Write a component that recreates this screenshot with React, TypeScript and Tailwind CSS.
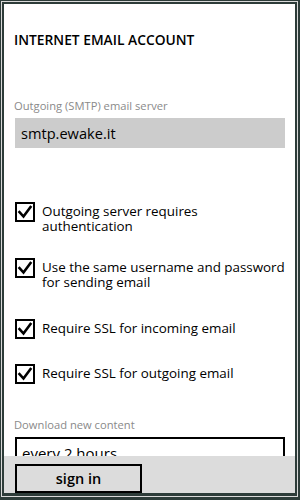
import { ReactNode } from 'react';

function CheckRow({ children, className }: { children: ReactNode; className?: string }) {
  return (
    <div className={`flex items-start ${className ?? ''}`}>
      <div className="w-[20px] h-[20px] shrink-0 border-2 border-black bg-white flex items-center justify-center">
        <svg width="16" height="16" viewBox="0 0 16 16">
          <path d="M2.5 8 L6.5 12.5 L13.5 3" fill="none" stroke="black" strokeWidth="2.6" strokeLinecap="square" />
        </svg>
      </div>
      <p className="ml-[7px] pt-[2px] text-[13.4px] leading-[15px] text-black whitespace-nowrap">{children}</p>
    </div>
  );
}

export default function App() {
  return (
    <div
      className="w-[300px] h-[500px] bg-[#d9d9d9] border-[#2d3c39] border-t border-l border-r-2 border-b-[3px] p-[1px]"
      style={{ fontFamily: '"Open Sans", "Noto Sans", sans-serif' }}
    >
      <div className="relative h-full bg-white border-[#2d3c39] border-t-2 border-l-2 border-r-2 border-b-[3px] overflow-hidden">
        <div className="px-[10px]">
          <h1 className="mt-[26px] text-[13.8px] leading-[20px] font-semibold text-black">INTERNET EMAIL ACCOUNT</h1>

          <p className="mt-[48px] text-[11.2px] leading-[16px] text-[#8a8a8a]">Outgoing (SMTP) email server</p>
          <div className="mt-[4px] ml-[1px] h-[30px] bg-[#cccccc] px-[6px] text-[14.6px] leading-[30px] text-black">
            smtp.ewake.it
          </div>

          <CheckRow className="mt-[54px] ml-[1px]">
            Outgoing server requires
            <br />
            authentication
          </CheckRow>
          <CheckRow className="mt-[24px] ml-[1px]">
            Use the same username and password
            <br />
            for sending email
          </CheckRow>
          <CheckRow className="mt-[29px] ml-[1px]">Require SSL for incoming email</CheckRow>
          <CheckRow className="mt-[25px] ml-[1px]">Require SSL for outgoing email</CheckRow>

          <p className="mt-[33px] text-[11.2px] leading-[16px] text-[#8a8a8a]">Download new content</p>
          <div className="mt-[4px] ml-[1px] h-[32px] border-2 border-black px-[5px] text-[15px] leading-[28px] text-black">
            every 2 hours
          </div>
        </div>

        <div className="absolute left-0 right-0 bottom-0 h-[37px] bg-[#dcdcdc] px-[11px] pt-[8px]">
          <button className="w-[127px] h-[29px] border-2 border-black bg-[#dcdcdc] text-[14.5px] leading-[24px] font-semibold text-black">
            sign in
          </button>
        </div>
      </div>
    </div>
  );
}
